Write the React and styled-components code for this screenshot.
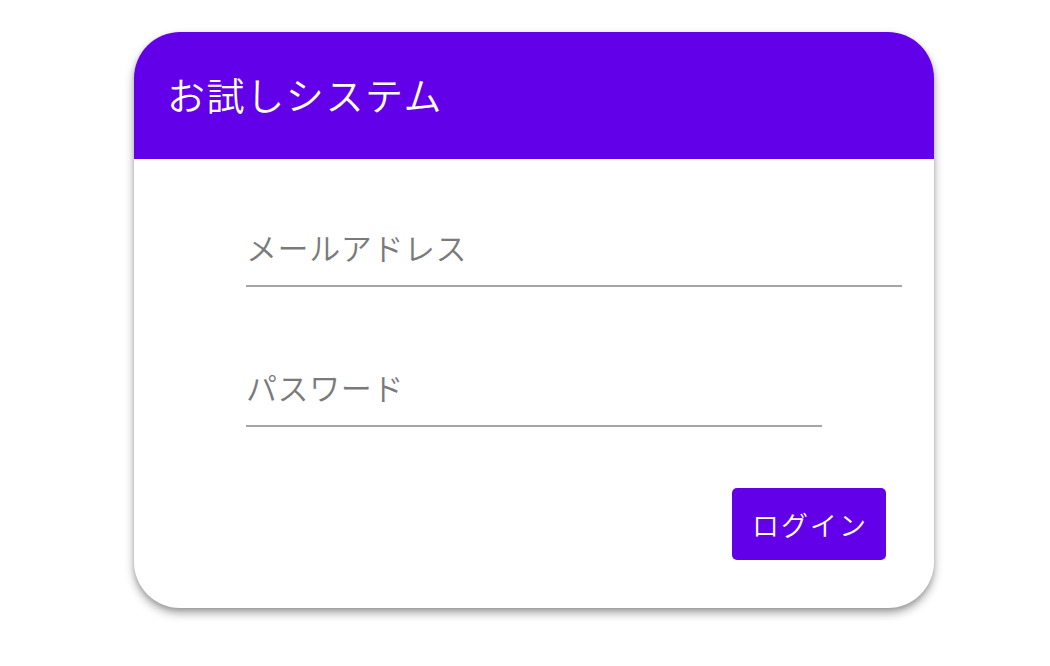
import styled, { createGlobalStyle } from 'styled-components';

const GlobalStyle = createGlobalStyle`
  html, body {
    margin: 0;
    padding: 0;
    background: #ffffff;
  }
  body {
    font-family: "Noto Sans CJK JP", "Noto Sans", sans-serif;
  }
  * {
    box-sizing: border-box;
  }
`;

const Page = styled.div`
  display: flex;
  padding: 32px 0 0 134px;
  min-height: 666px;
`;

const Card = styled.div`
  width: 800px;
  height: 576px;
  border-radius: 46px;
  background: #ffffff;
  overflow: hidden;
  box-shadow: 0 5px 10px rgba(0, 0, 0, 0.35), 0 2px 4px rgba(0, 0, 0, 0.12);
  display: flex;
  flex-direction: column;
`;

const Header = styled.div`
  height: 127px;
  background: #6200ea;
  display: flex;
  align-items: center;
  padding-left: 33px;
  padding-bottom: 4px;
`;

const Title = styled.h1`
  margin: 0;
  color: #ffffff;
  font-size: 38px;
  font-weight: 350;
  letter-spacing: 1.6px;
`;

const Form = styled.form`
  flex: 1;
  display: flex;
  flex-direction: column;
  padding: 56px 32px 48px 112px;
`;

const Input = styled.input`
  display: block;
  width: ${(p) => p.$width}px;
  height: 72px;
  padding: 0 0 8px;
  margin-bottom: ${(p) => p.$gap || 0}px;
  border: none;
  border-bottom: 2px solid #a6a6a6;
  outline: none;
  background: transparent;
  font-family: inherit;
  font-size: 31px;
  font-weight: 350;
  letter-spacing: 0.6px;
  color: #333;
  &::placeholder {
    color: #7a7a7a;
  }
`;

const Actions = styled.div`
  display: flex;
  justify-content: flex-end;
  margin-top: auto;
  padding-right: 16px;
`;

const LoginButton = styled.button`
  width: 154px;
  height: 72px;
  border: none;
  border-radius: 5px;
  background: #6200ea;
  color: #ffffff;
  font-family: inherit;
  font-size: 27px;
  font-weight: 350;
  letter-spacing: 2px;
  padding: 0 0 0 2px;
  cursor: pointer;
`;

export default function App() {
  return (
    <>
      <GlobalStyle />
      <Page>
        <Card>
          <Header>
            <Title>お試しシステム</Title>
          </Header>
          <Form onSubmit={(e) => e.preventDefault()}>
            <Input type="email" placeholder="メールアドレス" $width={656} $gap={68} />
            <Input type="password" placeholder="パスワード" $width={576} />
            <Actions>
              <LoginButton type="submit">ログイン</LoginButton>
            </Actions>
          </Form>
        </Card>
      </Page>
    </>
  );
}
